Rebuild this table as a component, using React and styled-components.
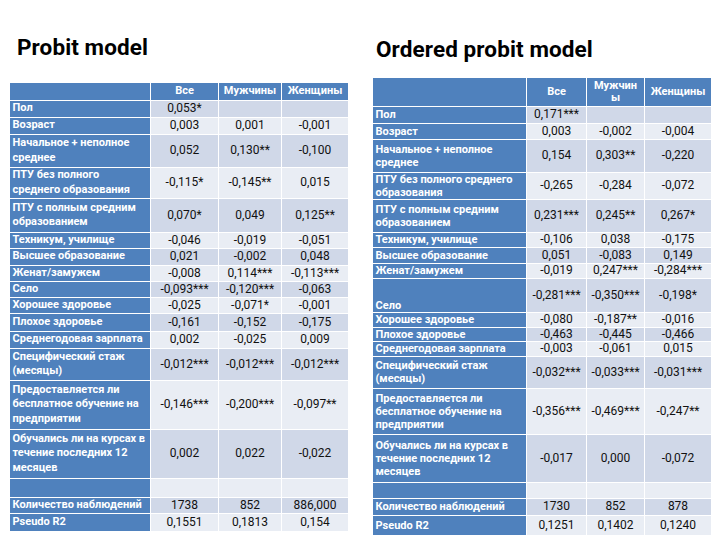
import React from 'react';
import styled, { createGlobalStyle } from 'styled-components';

const GlobalStyle = createGlobalStyle`
  html, body {
    margin: 0;
    padding: 0;
    background: #ffffff;
  }
  body {
    font-family: Roboto, "Liberation Sans", sans-serif;
    color: #000;
  }
`;

const probitRows = [
  { h: 17, label: ['Пол'], v: ['0,053*', '', ''] },
  { h: 17, label: ['Возраст'], v: ['0,003', '0,001', '-0,001'] },
  { h: 33, label: ['Начальное + неполное', 'среднее'], v: ['0,052', '0,130**', '-0,100'] },
  { h: 31, label: ['ПТУ без полного', 'среднего образования'], v: ['-0,115*', '-0,145**', '0,015'] },
  { h: 34, label: ['ПТУ с полным средним', 'образованием'], v: ['0,070*', '0,049', '0,125**'] },
  { h: 16, label: ['Техникум, училище'], v: ['-0,046', '-0,019', '-0,051'] },
  { h: 17, label: ['Высшее образование'], v: ['0,021', '-0,002', '0,048'] },
  { h: 16, label: ['Женат/замужем'], v: ['-0,008', '0,114***', '-0,113***'] },
  { h: 16, label: ['Село'], v: ['-0,093***', '-0,120***', '-0,063'] },
  { h: 16, label: ['Хорошее здоровье'], v: ['-0,025', '-0,071*', '-0,001'] },
  { h: 18, label: ['Плохое здоровье'], v: ['-0,161', '-0,152', '-0,175'] },
  { h: 17, label: ['Среднегодовая зарплата'], v: ['0,002', '-0,025', '0,009'] },
  { h: 32, label: ['Специфический стаж', '(месяцы)'], v: ['-0,012***', '-0,012***', '-0,012***'] },
  { h: 49, label: ['Предоставляется ли', 'бесплатное обучение на', 'предприятии'], v: ['-0,146***', '-0,200***', '-0,097**'] },
  { h: 49, label: ['Обучались ли на курсах в', 'течение последних 12', 'месяцев'], v: ['0,002', '0,022', '-0,022'] },
  { h: 19, label: [''], v: ['', '', ''] },
  { h: 16, label: ['Количество наблюдений'], v: ['1738', '852', '886,000'] },
  { h: 18, label: ['Pseudo R2'], v: ['0,1551', '0,1813', '0,154'] },
];

const orderedRows = [
  { h: 17, label: ['Пол'], v: ['0,171***', '', ''] },
  { h: 16, label: ['Возраст'], v: ['0,003', '-0,002', '-0,004'] },
  { h: 33, label: ['Начальное + неполное', 'среднее'], v: ['0,154', '0,303**', '-0,220'] },
  { h: 27, label: ['ПТУ без полного среднего', 'образования'], v: ['-0,265', '-0,284', '-0,072'] },
  { h: 33, label: ['ПТУ с полным средним', 'образованием'], v: ['0,231***', '0,245**', '0,267*'] },
  { h: 15, label: ['Техникум, училище'], v: ['-0,106', '0,038', '-0,175'] },
  { h: 16, label: ['Высшее образование'], v: ['0,051', '-0,083', '0,149'] },
  { h: 15, label: ['Женат/замужем'], v: ['-0,019', '0,247***', '-0,284***'] },
  { h: 34, label: ['Село'], v: ['-0,281***', '-0,350***', '-0,198*'], bottom: true },
  { h: 15, label: ['Хорошее здоровье'], v: ['-0,080', '-0,187**', '-0,016'] },
  { h: 14, label: ['Плохое здоровье'], v: ['-0,463', '-0,445', '-0,466'] },
  { h: 15, label: ['Среднегодовая зарплата'], v: ['-0,003', '-0,061', '0,015'] },
  { h: 32, label: ['Специфический стаж', '(месяцы)'], v: ['-0,032***', '-0,033***', '-0,031***'] },
  { h: 46, label: ['Предоставляется ли', 'бесплатное обучение на', 'предприятии'], v: ['-0,356***', '-0,469***', '-0,247**'] },
  { h: 48, label: ['Обучались ли на курсах в', 'течение последних 12', 'месяцев'], v: ['-0,017', '0,000', '-0,072'] },
  { h: 16, label: [''], v: ['', '', ''] },
  { h: 17, label: ['Количество наблюдений'], v: ['1730', '852', '878'] },
  { h: 20, label: ['Pseudo R2'], v: ['0,1251', '0,1402', '0,1240'] },
];

const Lines = ({ lines }) =>
  lines.map((line, i) => (
    <React.Fragment key={i}>
      {i > 0 && <br />}
      {line}
    </React.Fragment>
  ));

const ResultTable = ({ rows, cols, headH, headers, lh }) => (
  <Table>
    <colgroup>
      {cols.map((w, i) => (
        <col key={i} style={{ width: w }} />
      ))}
    </colgroup>
    <tbody>
      <tr style={{ height: headH }}>
        <HeadCell />
        {headers.map((h, i) => (
          <HeadCell key={i}>
            <Lines lines={h} />
          </HeadCell>
        ))}
      </tr>
      {rows.map((row, i) => (
        <tr key={i} style={{ height: row.h }}>
          <LabelCell $bottom={row.bottom} $lh={lh}>
            <Lines lines={row.label} />
          </LabelCell>
          {row.v.map((val, j) => (
            <Cell key={j} $alt={i % 2 === 1}>
              {val}
            </Cell>
          ))}
        </tr>
      ))}
    </tbody>
  </Table>
);

const App = () => (
  <>
    <GlobalStyle />
    <Page>
      <Panel>
        <Title $top={35} $left={8} $gap={24}>
          Probit model
        </Title>
        <ResultTable
          rows={probitRows}
          cols={[141, 68, 63, 67]}
          headH={17}
          lh={14.5}
          headers={[['Все'], ['Мужчины'], ['Женщины']]}
        />
      </Panel>
      <Panel>
        <Title $top={37} $left={4} $gap={17}>
          Ordered probit model
        </Title>
        <ResultTable
          rows={orderedRows}
          cols={[154, 60, 58, 67]}
          headH={28}
          lh={13}
          headers={[['Все'], ['Мужчин', 'ы'], ['Женщины']]}
        />
      </Panel>
    </Page>
  </>
);

export default App;

const Page = styled.div`
  display: flex;
  gap: 24px;
  padding-left: 9px;
  width: 720px;
  height: 540px;
  box-sizing: border-box;
  overflow: hidden;
`;

const Panel = styled.section`
  display: flex;
  flex-direction: column;
  width: 339px;
`;

const Title = styled.h1`
  margin: ${({ $top, $gap }) => `${$top}px 0 ${$gap}px`};
  padding-left: ${({ $left }) => $left}px;
  font-family: Roboto, "Liberation Sans", sans-serif;
  font-size: 22.5px;
  line-height: 24px;
  font-weight: 700;
  color: #000;
  letter-spacing: 0.1px;
`;

const Table = styled.table`
  width: 339px;
  table-layout: fixed;
  border-collapse: collapse;
  font-family: Roboto, "Liberation Sans", sans-serif;
`;

const HeadCell = styled.th`
  background: #4f81bd;
  color: #fff;
  font-size: 11px;
  font-weight: 700;
  line-height: 12px;
  text-align: center;
  padding: 0 2px;
  border: 1px solid #fff;
  border-top: none;
  white-space: nowrap;
`;

const LabelCell = styled.th`
  background: #4f81bd;
  color: #fff;
  font-size: 11px;
  font-weight: 700;
  line-height: ${({ $lh }) => $lh}px;
  text-align: left;
  vertical-align: ${({ $bottom }) => ($bottom ? 'bottom' : 'middle')};
  padding: 0 2px 0 3px;
  border: 1px solid #fff;
  border-left: none;
  white-space: nowrap;
  overflow: hidden;
`;

const Cell = styled.td`
  background: ${({ $alt }) => ($alt ? '#e9edf4' : '#d0d8e8')};
  color: #111;
  font-size: 12px;
  line-height: 13px;
  text-align: center;
  vertical-align: middle;
  padding: 0;
  border: 1px solid #fff;
  white-space: nowrap;
`;
